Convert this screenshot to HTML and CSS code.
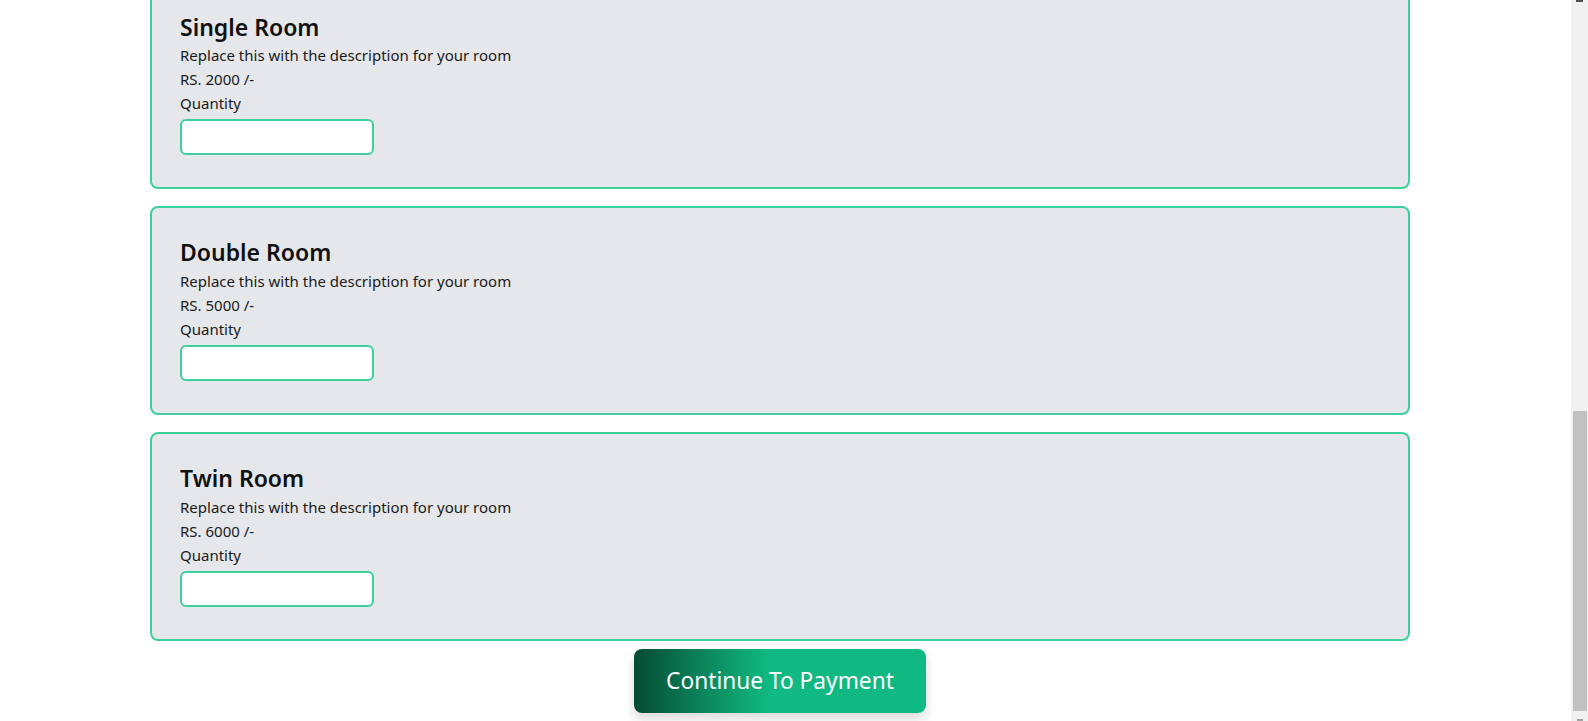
FILE: index.html
```html
<!DOCTYPE html>
<html lang="en">
<head>
<meta charset="utf-8">
<title>Select Rooms</title>
<link rel="stylesheet" href="styles.css">
</head>
<body>
<div class="window">
  <div class="viewport">
    <main class="page">
      <form class="rooms">
        <div class="room-card">
          <h4 class="room-title">Single Room</h4>
          <p class="room-line">Replace this with the description for your room</p>
          <p class="room-line">RS. 2000 /-</p>
          <label class="room-line" for="q-single">Quantity</label>
          <input class="qty" id="q-single" type="number" min="0">
        </div>
        <div class="room-card">
          <h4 class="room-title">Double Room</h4>
          <p class="room-line">Replace this with the description for your room</p>
          <p class="room-line">RS. 5000 /-</p>
          <label class="room-line" for="q-double">Quantity</label>
          <input class="qty" id="q-double" type="number" min="0">
        </div>
        <div class="room-card">
          <h4 class="room-title">Twin Room</h4>
          <p class="room-line">Replace this with the description for your room</p>
          <p class="room-line">RS. 6000 /-</p>
          <label class="room-line" for="q-twin">Quantity</label>
          <input class="qty" id="q-twin" type="number" min="0">
        </div>
        <div class="actions">
          <button class="pay-btn" type="button">Continue To Payment</button>
        </div>
      </form>
    </main>
  </div>
  <div class="scrollbar" aria-hidden="true">
    <span class="sb-arrow-up"></span>
    <div class="sb-track"><div class="sb-thumb"></div></div>
    <span class="sb-arrow-down"></span>
  </div>
</div>
</body>
</html>
```

FILE: styles.css
```css
* { box-sizing: border-box; }

html, body {
  margin: 0;
  padding: 0;
  background: #ffffff;
}

body {
  font-family: "Noto Sans", "Open Sans", sans-serif;
  color: #111111;
  overflow: hidden;
}

.window {
  display: flex;
  height: 721px;
}

.viewport {
  flex: 1;
  overflow: hidden;
  display: flex;
  flex-direction: column;
  justify-content: flex-end;
}

.page {
  flex-shrink: 0;
  padding: 0 0 8px 150px;
}

.rooms {
  width: 1260px;
  display: flex;
  flex-direction: column;
  gap: 17px;
}

.room-card {
  background: #e5e7eb;
  border: 2px solid #3dd09b;
  border-radius: 8px;
  padding: 32px 28px;
  display: flex;
  flex-direction: column;
  align-items: flex-start;
}

.room-title {
  margin: 0 0 4px;
  font-size: 23px;
  line-height: 24.8px;
  font-weight: 600;
  color: #111111;
}

.room-line {
  margin: 0;
  font-size: 15px;
  line-height: 24px;
  color: #1a1a1a;
}

.qty {
  margin-top: 4px;
  width: 194px;
  height: 36px;
  border: 2px solid #3dd09b;
  border-radius: 6px;
  background: #ffffff;
  outline: none;
  padding: 0 8px;
  font: inherit;
}

.actions {
  display: flex;
  justify-content: center;
  margin-top: -9px;
}

.pay-btn {
  height: 64px;
  width: 292px;
  border: none;
  border-radius: 8px;
  background: linear-gradient(90deg, #054a33 0%, #0b8159 22%, #10b981 46%, #10b981 100%);
  color: #ffffff;
  font-family: "Noto Sans", "Open Sans", sans-serif;
  font-size: 22.7px;
  line-height: 36px;
  box-shadow: 0 6px 12px rgba(0, 0, 0, 0.15);
  cursor: pointer;
}

.scrollbar {
  width: 17px;
  flex-shrink: 0;
  background: #f1f1f1;
  display: flex;
  flex-direction: column;
  align-items: center;
}

.sb-arrow-up {
  display: block;
  width: 7px;
  height: 2px;
  background: #505050;
}

.sb-track {
  flex: 1;
  width: 100%;
  padding: 0 1px 0 2px;
  display: flex;
  flex-direction: column;
  justify-content: flex-end;
}

.sb-thumb {
  height: 300px;
  background: #c1c1c1;
}

.sb-arrow-down {
  display: block;
  margin-top: 8px;
  width: 6px;
  height: 2px;
  background: #a3a3a3;
}
```
